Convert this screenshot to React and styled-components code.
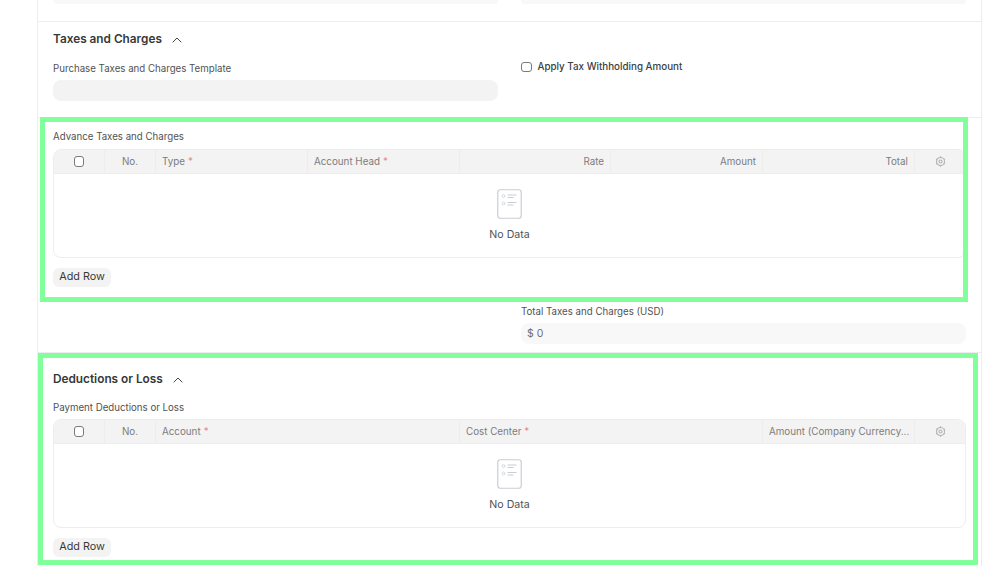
import React from "react";
import styled, { createGlobalStyle } from "styled-components";

const Global = createGlobalStyle`
  html, body { margin: 0; padding: 0; background: #fff; overflow: hidden; }
  body { font-family: Inter, "Liberation Sans", sans-serif; color: #383838; }
`;

const Stage = styled.div`
  position: relative;
  width: 982px;
  height: 566px;
  overflow: hidden;
`;

const Page = styled.main`
  width: 945px;
  box-sizing: border-box;
  height: 566px;
  margin-left: 37px;
  border-left: 1px solid #ededed;
  border-right: 1px solid #ededed;
`;

const TopSection = styled.section`
  display: grid;
  grid-template-columns: 445px 445px;
  column-gap: 23px;
  padding: 0 15px;
  height: 21px;
  border-bottom: 1px solid #ededed;
`;

const StubInput = styled.div`
  height: 4px;
  background: #f8f8f8;
  border-radius: 0 0 8px 8px;
`;

const TaxSection = styled.section`
  box-sizing: border-box;
  height: 95.5px;
  padding: 8.5px 15px 0;
  border-bottom: 1px solid #ededed;
`;

const TableSection = styled.section`
  box-sizing: border-box;
  height: 235px;
  padding: 13px 15px 0;
  border-bottom: 1px solid #ededed;
`;

const DeductionSection = styled.section`
  padding: 18px 15px 0;
`;

const HeadingRow = styled.div`
  display: flex;
  align-items: center;
  gap: 10px;
  height: 17px;
`;

const Heading = styled.h3`
  margin: 0;
  font-size: 11.8px;
  line-height: 17px;
  font-weight: 600;
  color: #383838;
`;

const Chevron = styled.svg`
  width: 10px;
  height: 6px;
  margin-top: 2px;
  fill: none;
  stroke: #444;
  stroke-width: 1;
`;

const TwoColumns = styled.div`
  display: grid;
  grid-template-columns: 445px 445px;
  column-gap: 23px;
  margin-top: 15px;
`;

const FieldLabel = styled.div`
  font-size: 9.7px;
  line-height: 12px;
  color: #525252;
`;

const Input = styled.div`
  box-sizing: border-box;
  height: 21px;
  margin-top: ${(p) => p.$gap ?? 5.5}px;
  padding: 0 6px;
  font-size: 10.5px;
  line-height: 21px;
  color: #6f6f6f;
  border-radius: 8px;
  background: ${(p) => (p.$light ? "#f8f8f8" : "#f3f3f3")};
`;

const CheckRow = styled.label`
  display: flex;
  align-items: center;
  gap: 6px;
  height: 9px;
  font-size: 9.8px;
  font-weight: 500;
  line-height: 10px;
  color: #404040;
`;

const Check = styled.input.attrs({ type: "checkbox" })`
  appearance: none;
  box-sizing: border-box;
  width: 10.5px;
  height: 10.5px;
  margin: 0;
  border: 1px solid #7a7a7a;
  border-radius: 3px;
  background: #fff;
  flex: none;
`;

const TableLabel = styled(FieldLabel)`
  margin-top: ${(p) => p.$top ?? 0}px;
  margin-bottom: ${(p) => p.$gap}px;
`;

const Table = styled.div`
  box-sizing: border-box;
  height: 109px;
  border: 1px solid #ededed;
  border-radius: 8px;
  overflow: hidden;
`;

const HeadRow = styled.div`
  display: grid;
  grid-template-columns: ${(p) => p.$cols};
  box-sizing: border-box;
  height: 24px;
  background: #f3f3f3;
  border-bottom: 1px solid #ededed;
`;

const HeadCell = styled.div`
  display: flex;
  align-items: center;
  justify-content: ${(p) => (p.$align === "right" ? "flex-end" : p.$align === "center" ? "center" : "flex-start")};
  box-sizing: border-box;
  min-width: 0;
  padding: 0 6px;
  font-size: 9.8px;
  color: #7c7c7c;
  white-space: nowrap;
  border-right: ${(p) => (p.$last ? "none" : "1px solid #ededed")};
`;

const Star = styled.span`
  margin-left: 3px;
  color: #e58a8a;
`;

const Empty = styled.div`
  display: flex;
  flex-direction: column;
  align-items: center;
  padding-top: 15px;
`;

const EmptyIcon = styled.svg`
  width: 25px;
  height: 30px;
  fill: none;
  stroke: #c9ced4;
`;

const EmptyText = styled.div`
  margin-top: 9px;
  font-size: 10.6px;
  line-height: 13px;
  color: #525252;
`;

const AddRow = styled.button`
  display: block;
  box-sizing: border-box;
  width: 58px;
  height: 19px;
  margin-top: 10px;
  padding: 0 0 2px;
  border: none;
  border-radius: 6px;
  background: #f3f3f3;
  font-family: inherit;
  font-size: 10.8px;
  color: #383838;
`;

const TotalField = styled.div`
  margin: 19px 0 0 468px;
`;

const Gear = styled.svg`
  width: 11px;
  height: 11px;
  fill: none;
  stroke: #b4b4b4;
  stroke-width: 1.2;
`;

const Highlight = styled.div`
  position: absolute;
  box-sizing: border-box;
  left: ${(p) => p.$x}px;
  top: ${(p) => p.$y}px;
  width: ${(p) => p.$w}px;
  height: ${(p) => p.$h}px;
  border: 5px solid #80ff9b;
  pointer-events: none;
`;

const GearIcon = () => (
  <Gear viewBox="0 0 12 12">
    <circle cx="6" cy="6" r="4.4" />
    <circle cx="6" cy="6" r="1.7" />
    <path d="M6 .4v1.2M6 10.4v1.2M1.1 3.2l1 .6M9.9 8.2l1 .6M1.1 8.8l1-.6M9.9 3.8l1-.6" />
  </Gear>
);

const NoDataIcon = () => (
  <EmptyIcon viewBox="0 0 25 30">
    <rect x="0.75" y="0.75" width="23.5" height="28.5" rx="2.5" strokeWidth="1.2" />
    <circle cx="6.5" cy="7" r="1.4" strokeWidth="0.8" />
    <circle cx="6.5" cy="14.5" r="1.4" strokeWidth="0.8" />
    <path d="M10.5 6h9M10.5 8.5h6M10.5 13.5h9M10.5 16h6" strokeWidth="1" />
  </EmptyIcon>
);

const ChevronUp = () => (
  <Chevron viewBox="0 0 10 6">
    <path d="M.7 5.3 5 1l4.3 4.3" />
  </Chevron>
);

const GridTable = ({ cols, cells }) => (
  <Table>
    <HeadRow $cols={cols}>
      <HeadCell $align="center"><Check /></HeadCell>
      <HeadCell $align="center">No.</HeadCell>
      {cells.map((c) => (
        <HeadCell key={c.label} $align={c.right ? "right" : "left"}>
          {c.label}
          {c.required && <Star>*</Star>}
        </HeadCell>
      ))}
      <HeadCell $align="center" $last><GearIcon /></HeadCell>
    </HeadRow>
    <Empty>
      <NoDataIcon />
      <EmptyText>No Data</EmptyText>
    </Empty>
  </Table>
);

export default function App() {
  return (
    <Stage>
      <Global />
      <Page>
        <TopSection>
          <StubInput />
          <StubInput />
        </TopSection>

        <TaxSection>
          <HeadingRow>
            <Heading>Taxes and Charges</Heading>
            <ChevronUp />
          </HeadingRow>
          <TwoColumns>
            <div>
              <FieldLabel>Purchase Taxes and Charges Template</FieldLabel>
              <Input />
            </div>
            <CheckRow>
              <Check />
              Apply Tax Withholding Amount
            </CheckRow>
          </TwoColumns>
        </TaxSection>

        <TableSection>
          <TableLabel $gap={6.5}>Advance Taxes and Charges</TableLabel>
          <GridTable
            cols="51px 51px 152px 152px 151px 152px 152px 1fr"
            cells={[
              { label: "Type", required: true },
              { label: "Account Head", required: true },
              { label: "Rate", right: true },
              { label: "Amount", right: true },
              { label: "Total", right: true },
            ]}
          />
          <AddRow>Add Row</AddRow>
          <TotalField>
            <FieldLabel>Total Taxes and Charges (USD)</FieldLabel>
            <Input $light $gap={5}>$ 0</Input>
          </TotalField>
        </TableSection>

        <DeductionSection>
          <HeadingRow>
            <Heading>Deductions or Loss</Heading>
            <ChevronUp />
          </HeadingRow>
          <TableLabel $top={14.5} $gap={5}>Payment Deductions or Loss</TableLabel>
          <GridTable
            cols="51px 51px 304px 303px 152px 1fr"
            cells={[
              { label: "Account", required: true },
              { label: "Cost Center", required: true },
              { label: "Amount (Company Currency..." },
            ]}
          />
          <AddRow>Add Row</AddRow>
        </DeductionSection>
      </Page>

      <Highlight $x={40} $y={117} $w={928} $h={185} />
      <Highlight $x={38} $y={352.5} $w={940} $h={212.5} />
    </Stage>
  );
}
